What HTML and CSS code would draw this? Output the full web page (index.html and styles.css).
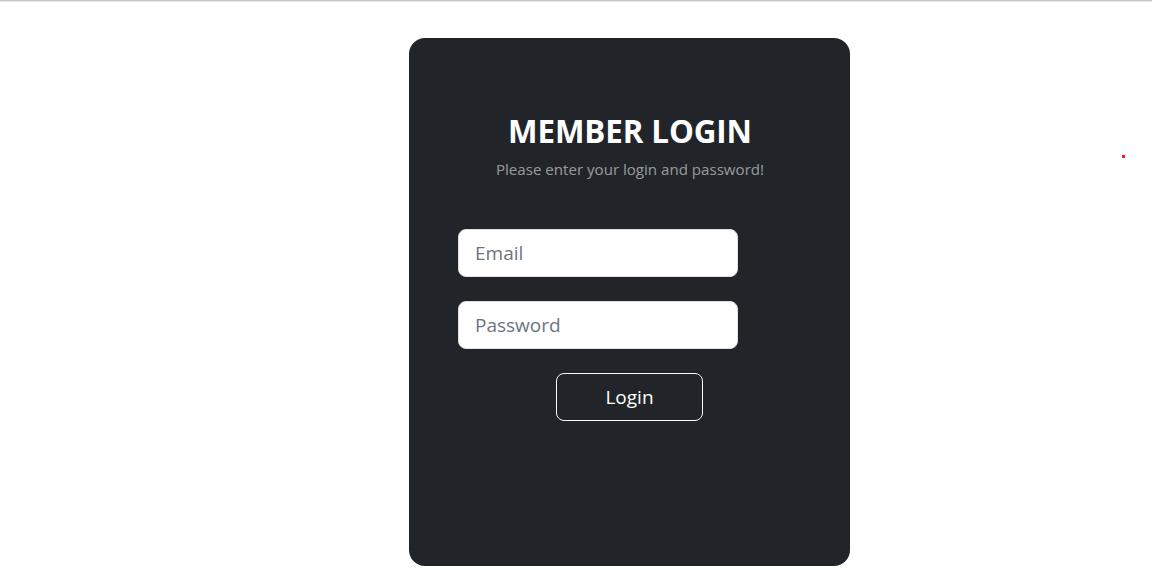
FILE: index.html
```html
<!DOCTYPE html>
<html lang="en">
<head>
<meta charset="utf-8">
<title>Member Login</title>
<link rel="stylesheet" href="styles.css">
</head>
<body>
<div class="topline"></div>
<main class="page">
  <section class="card">
    <h2 class="title">MEMBER LOGIN</h2>
    <p class="subtitle">Please enter your login and password!</p>
    <form class="form">
      <input class="field" type="email" placeholder="Email">
      <input class="field" type="password" placeholder="Password">
      <button class="btn" type="button">Login</button>
    </form>
  </section>
  <span class="dot"></span>
</main>
</body>
</html>
```
FILE: styles.css
```css
* { box-sizing: border-box; }
html, body { margin: 0; padding: 0; background: #fff; }
body { font-family: "Open Sans", "Noto Sans", sans-serif; }
.topline { height: 2px; background: #c6c6c9; border-bottom: 1px solid #e4e4e4; }
.page { position: relative; display: flex; justify-content: flex-start; padding: 36px 0 0 409px; }
.card {
  width: 441px;
  height: 528px;
  background: #212529;
  border-radius: 16px;
  padding: 73px 48px 48px 49px;
  text-align: center;
  color: #fff;
}
.title {
  margin: 0 0 6px;
  font-size: 31.3px;
  font-weight: 700;
  line-height: 40px;
  letter-spacing: -0.1px;
}
.subtitle {
  margin: 0 0 48px;
  font-size: 15.1px;
  line-height: 24px;
  color: rgba(255,255,255,0.55);
}
.form { display: flex; flex-direction: column; align-items: flex-start; }
.field {
  width: 280px;
  height: 48px;
  margin-bottom: 24px;
  padding: 0 16px;
  font-family: inherit;
  font-size: 19px;
  color: #212529;
  background: #fff;
  border: 1px solid #dee2e6;
  border-radius: 8px;
  outline: none;
}
.field::placeholder { color: #6c757d; }
.btn {
  align-self: center;
  width: 147px;
  height: 48px;
  margin-left: -1px;
  font-family: inherit;
  font-size: 19px;
  color: #fff;
  background: transparent;
  border: 1px solid #f8f9fa;
  border-radius: 8px;
  cursor: pointer;
}
.dot {
  position: absolute;
  left: 1122px;
  top: 153px;
  width: 3px;
  height: 3px;
  background: #e8202a;
}
```
